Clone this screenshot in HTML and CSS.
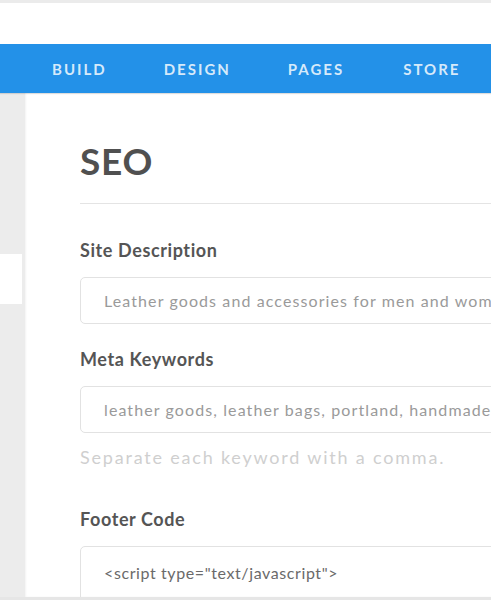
FILE: index.html
```html
<!DOCTYPE html>
<html lang="en">
<head>
<meta charset="utf-8">
<title>SEO</title>
<link rel="stylesheet" href="styles.css">
</head>
<body>
<div class="topbar"></div>
<nav class="nav">
  <a class="nav-item">BUILD</a>
  <a class="nav-item">DESIGN</a>
  <a class="nav-item">PAGES</a>
  <a class="nav-item">STORE</a>
</nav>
<div class="workspace">
  <aside class="sidebar"><div class="sidebar-item"></div></aside>
  <main class="panel">
    <header class="panel-header"><h1 class="title">SEO</h1></header>
    <div class="field">
      <label class="label">Site Description</label>
      <div class="input">Leather goods and accessories for men and women, handmade in Portland</div>
    </div>
    <div class="field">
      <label class="label">Meta Keywords</label>
      <div class="input">leather goods, leather bags, portland, handmade, wallets</div>
      <p class="help">Separate each keyword with a comma.</p>
    </div>
    <div class="field field-footer">
      <label class="label">Footer Code</label>
      <div class="input code">&lt;script type="text/javascript"&gt;</div>
    </div>
  </main>
</div>
<div class="bottombar"></div>
</body>
</html>
```
FILE: styles.css
```css
* { box-sizing: border-box; }
html, body { margin: 0; padding: 0; }
body {
  width: 491px;
  height: 600px;
  overflow: hidden;
  background: #fff;
  font-family: Lato, "Liberation Sans", sans-serif;
}
.topbar {
  height: 44px;
  border-top: 3px solid #ebebeb;
  background: #fff;
}
.nav {
  height: 49px;
  background: #2391e8;
  display: flex;
  align-items: center;
  padding-left: 52px;
  box-shadow: 0 1px 1px rgba(0,0,0,0.12);
  position: relative;
  z-index: 1;
}
.nav-item {
  color: rgba(255,255,255,0.82);
  font-weight: 700;
  font-size: 15px;
  letter-spacing: 2px;
  white-space: nowrap;
}
.nav-item:nth-child(1) { margin-right: 57px; }
.nav-item:nth-child(2) { margin-right: 57px; }
.nav-item:nth-child(3) { margin-right: 59px; }
.workspace {
  display: flex;
  height: 504px;
}
.sidebar {
  width: 25px;
  flex: none;
  background: #ececec;
  padding-top: 161px;
}
.sidebar-item {
  width: 22px;
  height: 50px;
  background: #fff;
}
.panel {
  flex: 1;
  background: #fff;
  padding: 50px 0 0 55px;
  overflow: hidden;
  box-shadow: inset 1px 0 2px rgba(0,0,0,0.05);
}
.panel-header {
  border-bottom: 1px solid #e4e4e4;
  padding-bottom: 24px;
  width: 600px;
}
.title {
  margin: 0;
  font-size: 37px;
  line-height: 36px;
  font-weight: 700;
  color: #505050;
  letter-spacing: 0.8px;
}
.field { margin-top: 36px; }
.field + .field { margin-top: 25px; }
.field-footer { margin-top: 42px !important; }
.label {
  display: block;
  font-size: 18px;
  line-height: 20px;
  font-weight: 700;
  color: #555;
  letter-spacing: 0.6px;
  margin-bottom: 17px;
}
.input {
  width: 600px;
  height: 47px;
  border: 1.5px solid #e2e2e2;
  border-radius: 5px;
  padding-left: 23px;
  display: flex;
  align-items: center;
  font-size: 16px;
  letter-spacing: 1.1px;
  color: #9a9a9a;
  white-space: nowrap;
  overflow: hidden;
}
.code {
  height: 80px;
  align-items: flex-start;
  padding-top: 16px;
  font-size: 16px;
  letter-spacing: 0.6px;
  color: #6a6a6a;
}
.help {
  margin: 14px 0 0;
  font-size: 18px;
  line-height: 20px;
  color: #cfcfcf;
  letter-spacing: 1.8px;
}
.bottombar {
  height: 3px;
  background: #e6e6e6;
}
```
